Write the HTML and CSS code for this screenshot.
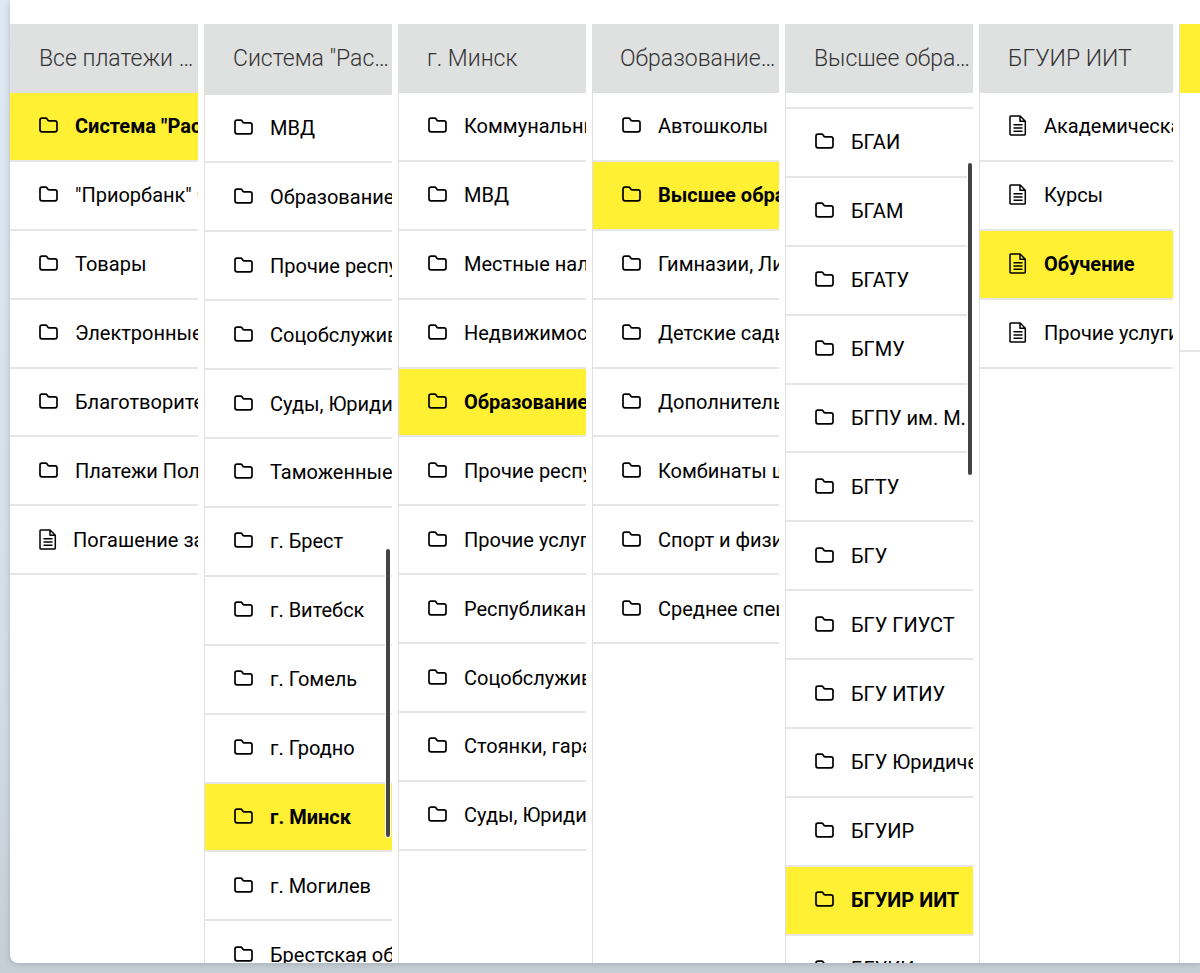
FILE: index.html
```html
<!DOCTYPE html>
<html lang="ru">
<head>
<meta charset="utf-8">
<title>Платежи</title>
<link rel="stylesheet" href="styles.css">
</head>
<body>
<svg class="defs" width="0" height="0" aria-hidden="true">
  <symbol id="folder" viewBox="0 0 19 16"><path d="M3 1.2h3.6c.8 0 1.2.3 1.7 1l.6 1c.3.5.6.7 1.2.7H16c1.2 0 2 .8 2 2v6.9c0 1.2-.8 2-2 2H3c-1.2 0-2-.8-2-2V3.2c0-1.2.8-2 2-2z" fill="none" stroke="#000" stroke-width="1.7" stroke-linejoin="round"/></symbol>
  <symbol id="doc" viewBox="0 0 18 21"><path d="M1.7 1h9.4l5.2 5.2v13.1c0 .4-.3.7-.7.7H1.7c-.4 0-.7-.3-.7-.7V1.7c0-.4.3-.7.7-.7zM11 1v5.3h5.3M4.5 9.8h9M4.5 13h9M4.5 16.2h9" fill="none" stroke="#000" stroke-width="1.5" stroke-linejoin="round"/></symbol>
</svg>
<main class="window">
  <section class="col col-first">
    <h2 class="head">Все платежи и услуги</h2>
    <ul class="list">
      <li class="row active"><svg class="ic"><use href="#folder"/></svg><span class="lbl">Система "Расчет" (ЕРИП)</span></li>
      <li class="row"><svg class="ic"><use href="#folder"/></svg><span class="lbl">"Приорбанк" ОАО</span></li>
      <li class="row"><svg class="ic"><use href="#folder"/></svg><span class="lbl">Товары</span></li>
      <li class="row"><svg class="ic"><use href="#folder"/></svg><span class="lbl">Электронные деньги</span></li>
      <li class="row"><svg class="ic"><use href="#folder"/></svg><span class="lbl">Благотворительность</span></li>
      <li class="row"><svg class="ic"><use href="#folder"/></svg><span class="lbl">Платежи Поларис</span></li>
      <li class="row"><svg class="ic ic-doc"><use href="#doc"/></svg><span class="lbl">Погашение задолженности</span></li>
    </ul>
  </section>
  <section class="col col-shift">
    <h2 class="head">Система "Расчет" (ЕРИП)</h2>
    <ul class="list">
      <li class="row"><svg class="ic"><use href="#folder"/></svg><span class="lbl">МВД</span></li>
      <li class="row"><svg class="ic"><use href="#folder"/></svg><span class="lbl">Образование и развитие</span></li>
      <li class="row"><svg class="ic"><use href="#folder"/></svg><span class="lbl">Прочие республиканские</span></li>
      <li class="row"><svg class="ic"><use href="#folder"/></svg><span class="lbl">Соцобслуживание</span></li>
      <li class="row"><svg class="ic"><use href="#folder"/></svg><span class="lbl">Суды, Юридические</span></li>
      <li class="row"><svg class="ic"><use href="#folder"/></svg><span class="lbl">Таможенные платежи</span></li>
      <li class="row"><svg class="ic"><use href="#folder"/></svg><span class="lbl">г. Брест</span></li>
      <li class="row"><svg class="ic"><use href="#folder"/></svg><span class="lbl">г. Витебск</span></li>
      <li class="row"><svg class="ic"><use href="#folder"/></svg><span class="lbl">г. Гомель</span></li>
      <li class="row"><svg class="ic"><use href="#folder"/></svg><span class="lbl">г. Гродно</span></li>
      <li class="row active"><svg class="ic"><use href="#folder"/></svg><span class="lbl">г. Минск</span></li>
      <li class="row"><svg class="ic"><use href="#folder"/></svg><span class="lbl">г. Могилев</span></li>
      <li class="row"><svg class="ic"><use href="#folder"/></svg><span class="lbl">Брестская область</span></li>
    </ul>
    <div class="thumb thumb-a"></div>
  </section>
  <section class="col">
    <h2 class="head">г. Минск</h2>
    <ul class="list">
      <li class="row"><svg class="ic"><use href="#folder"/></svg><span class="lbl">Коммунальные платежи</span></li>
      <li class="row"><svg class="ic"><use href="#folder"/></svg><span class="lbl">МВД</span></li>
      <li class="row"><svg class="ic"><use href="#folder"/></svg><span class="lbl">Местные налоги</span></li>
      <li class="row"><svg class="ic"><use href="#folder"/></svg><span class="lbl">Недвижимость</span></li>
      <li class="row active"><svg class="ic"><use href="#folder"/></svg><span class="lbl">Образование и развитие</span></li>
      <li class="row"><svg class="ic"><use href="#folder"/></svg><span class="lbl">Прочие республиканские</span></li>
      <li class="row"><svg class="ic"><use href="#folder"/></svg><span class="lbl">Прочие услуги</span></li>
      <li class="row"><svg class="ic"><use href="#folder"/></svg><span class="lbl">Республиканские</span></li>
      <li class="row"><svg class="ic"><use href="#folder"/></svg><span class="lbl">Соцобслуживание</span></li>
      <li class="row"><svg class="ic"><use href="#folder"/></svg><span class="lbl">Стоянки, гаражи</span></li>
      <li class="row"><svg class="ic"><use href="#folder"/></svg><span class="lbl">Суды, Юридические</span></li>
    </ul>
  </section>
  <section class="col col-narrow">
    <h2 class="head">Образование и развитие</h2>
    <ul class="list">
      <li class="row"><svg class="ic"><use href="#folder"/></svg><span class="lbl">Автошколы</span></li>
      <li class="row active"><svg class="ic"><use href="#folder"/></svg><span class="lbl">Высшее образование</span></li>
      <li class="row"><svg class="ic"><use href="#folder"/></svg><span class="lbl">Гимназии, Лицеи</span></li>
      <li class="row"><svg class="ic"><use href="#folder"/></svg><span class="lbl">Детские сады</span></li>
      <li class="row"><svg class="ic"><use href="#folder"/></svg><span class="lbl">Дополнительное</span></li>
      <li class="row"><svg class="ic"><use href="#folder"/></svg><span class="lbl">Комбинаты школьного</span></li>
      <li class="row"><svg class="ic"><use href="#folder"/></svg><span class="lbl">Спорт и физическая</span></li>
      <li class="row"><svg class="ic"><use href="#folder"/></svg><span class="lbl">Среднее специальное</span></li>
    </ul>
  </section>
  <section class="col">
    <h2 class="head">Высшее образование</h2>
    <div class="scrolled"></div>
    <ul class="list">
      <li class="row"><svg class="ic"><use href="#folder"/></svg><span class="lbl">БГАИ</span></li>
      <li class="row"><svg class="ic"><use href="#folder"/></svg><span class="lbl">БГАМ</span></li>
      <li class="row"><svg class="ic"><use href="#folder"/></svg><span class="lbl">БГАТУ</span></li>
      <li class="row"><svg class="ic"><use href="#folder"/></svg><span class="lbl">БГМУ</span></li>
      <li class="row"><svg class="ic"><use href="#folder"/></svg><span class="lbl">БГПУ им. М. Танка</span></li>
      <li class="row"><svg class="ic"><use href="#folder"/></svg><span class="lbl">БГТУ</span></li>
      <li class="row"><svg class="ic"><use href="#folder"/></svg><span class="lbl">БГУ</span></li>
      <li class="row"><svg class="ic"><use href="#folder"/></svg><span class="lbl">БГУ ГИУСТ</span></li>
      <li class="row"><svg class="ic"><use href="#folder"/></svg><span class="lbl">БГУ ИТИУ</span></li>
      <li class="row"><svg class="ic"><use href="#folder"/></svg><span class="lbl">БГУ Юридический</span></li>
      <li class="row"><svg class="ic"><use href="#folder"/></svg><span class="lbl">БГУИР</span></li>
      <li class="row active"><svg class="ic"><use href="#folder"/></svg><span class="lbl">БГУИР ИИТ</span></li>
      <li class="row"><svg class="ic"><use href="#folder"/></svg><span class="lbl">БГУКИ</span></li>
    </ul>
    <div class="thumb thumb-b"></div>
  </section>
  <section class="col col-wide">
    <h2 class="head">БГУИР ИИТ</h2>
    <ul class="list">
      <li class="row"><svg class="ic ic-doc"><use href="#doc"/></svg><span class="lbl">Академическая</span></li>
      <li class="row"><svg class="ic ic-doc"><use href="#doc"/></svg><span class="lbl">Курсы</span></li>
      <li class="row active"><svg class="ic ic-doc"><use href="#doc"/></svg><span class="lbl">Обучение</span></li>
      <li class="row"><svg class="ic ic-doc"><use href="#doc"/></svg><span class="lbl">Прочие услуги</span></li>
    </ul>
  </section>
  <section class="col col-last">
    <div class="head head-active"></div>
    <div class="stub"></div>
  </section>
</main>
</body>
</html>
```
FILE: styles.css
```css
* { box-sizing: border-box; }
html, body { margin: 0; padding: 0; }
body {
  height: 973px;
  overflow: hidden;
  padding-left: 10px;
  background: linear-gradient(180deg, #dfe9f5 0%, #d3dde7 70%, #c6cfd5 100%);
  font-family: Roboto, "Liberation Sans", sans-serif;
}
.defs { position: absolute; }
.window {
  display: flex;
  gap: 6px;
  width: 1190px;
  height: 963px;
  padding-top: 24px;
  overflow: hidden;
  background: #fff;
  border-bottom-left-radius: 8px;
  box-shadow: 0 1px 6px rgba(60, 70, 80, .25);
}
.col {
  position: relative;
  flex: 0 0 188px;
  width: 188px;
  height: 939px;
  overflow: hidden;
  border-left: 1px solid #e0e0e0;
}
.col-first { border-left: 0; }
.col-narrow { flex-basis: 187px; width: 187px; }
.col-wide { flex-basis: 194px; width: 194px; }
.col-last { flex-basis: 30px; width: 30px; }
.head {
  height: 69px;
  margin: 0 0 0 -1px;
  padding: 0 0 0 29px;
  background: #dfe0e0;
  color: #333;
  font-size: 23px;
  font-weight: 300;
  line-height: 69px;
  white-space: nowrap;
  overflow: hidden;
  text-overflow: ellipsis;
}
.col-first .head { margin-left: 0; }
.col-shift .head { height: 70.6px; }
.col-narrow .head { padding-left: 28px; }
.head-active { background: #fff033; margin-left: 0; }
.list { margin: 0; padding: 0; list-style: none; }
.scrolled { height: 16px; border-bottom: 2px solid #e6e6e6; }
.stub { height: 259px; border-bottom: 2px solid #e6e6e6; }
.row {
  display: flex;
  align-items: center;
  gap: 17px;
  height: 68.9px;
  padding-left: 29px;
  border-bottom: 2px solid #e6e6e6;
  color: #000;
  font-size: 20px;
  white-space: nowrap;
}
.row.active {
  background: #fff033;
  color: #000;
  font-weight: 700;
}
.lbl { display: block; }
.ic { flex: none; width: 19px; height: 16px; margin-top: -2px; }
.ic-doc { width: 18px; height: 21px; margin-top: -1px; margin-right: -1px; }
.col-wide .ic-doc { margin-right: 0; }
.thumb {
  position: absolute;
  width: 4px;
  background: #444;
  border-radius: 2px;
  box-shadow: 0 0 0 1px #fff;
}
.thumb-a { top: 525px; left: 181px; height: 288px; }
.thumb-b { top: 139px; left: 182px; height: 312px; }
```
